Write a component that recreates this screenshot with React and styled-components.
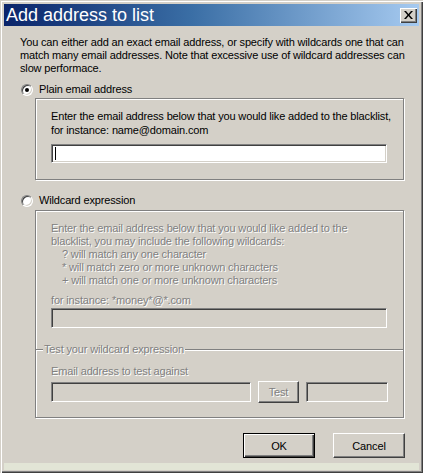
import React from 'react';
import styled, { createGlobalStyle, css } from 'styled-components';

const Global = createGlobalStyle`
  html,body{margin:0;padding:0;background:#d4d0c8;overflow:hidden;}
  *{box-sizing:border-box;}
`;

const face = '#d4d0c8';

const Window = styled.div`
  width:423px;height:473px;background:${face};
  padding:4px 4px 3px 4px;display:flex;flex-direction:column;
  font-family:"Liberation Sans",Arial,sans-serif;font-size:11px;color:#000;
  box-shadow:inset 1px 1px 0 ${face},inset 2px 2px 0 #fff,inset -1px -1px 0 #404040,inset -2px -2px 0 #808080;
`;

const TitleBar = styled.div`
  height:22px;display:flex;align-items:center;justify-content:space-between;
  padding:0 2px 0 2px;color:#fff;font-size:18px;line-height:22px;
  background:linear-gradient(90deg,#0a246a 0%,#3a6ea5 45%,#a6caf0 100%);
`;

const CloseBtn = styled.button`
  width:17px;height:15px;padding:0;margin:0;border:0;background:${face};
  display:flex;align-items:center;justify-content:center;
  box-shadow:inset 1px 1px 0 #fff,inset -1px -1px 0 #404040,inset -2px -2px 0 #808080;
`;

const Body = styled.div`
  flex:1;display:flex;flex-direction:column;padding:10px 14px 0 16px;
  letter-spacing:-0.15px;
`;

const Text = styled.div`
  line-height:${p => p.$lh || 13}px;white-space:nowrap;
  padding-left:${p => p.$indent || 0}px;
  margin-top:${p => p.$mt || 0}px;
  ${p => p.$disabled && css`color:#808080;text-shadow:1px 1px 0 #fff;`}
`;

const RadioRow = styled.label`
  display:flex;align-items:center;gap:6px;height:13px;line-height:13px;
  margin-top:${p => p.$mt}px;padding-left:1px;
`;

const RadioDot = styled.span`
  width:12px;height:12px;border-radius:50%;background:#fff;position:relative;flex:none;
  border:1px solid;border-color:#808080 #fff #fff #808080;
  box-shadow:inset 1px 1px 0 #404040,inset -1px -1px 0 ${face};
  ${p => p.$checked && css`
    &::after{content:'';position:absolute;left:3px;top:3px;width:4px;height:4px;border-radius:50%;background:#000;}
  `}
`;

const Group = styled.div`
  margin-left:15px;width:369px;display:flex;flex-direction:column;
  border:1px solid #808080;
  box-shadow:inset 1px 1px 0 #fff,1px 1px 0 #fff;
  margin-top:${p => p.$mt}px;
  padding:${p => p.$pad};
`;

const Inner = styled.div`
  display:flex;flex-direction:column;padding:${p => p.$pad};
`;

const TextBox = styled.div`
  height:${p => p.$h || 20}px;width:${p => p.$w}px;flex:none;
  margin-top:${p => p.$mt || 0}px;
  background:${p => (p.$disabled ? face : '#fff')};
  border:1px solid;border-color:#808080 #fff #fff #808080;
  box-shadow:inset 1px 1px 0 #404040,inset -1px -1px 0 ${face};
  display:flex;align-items:center;padding-left:3px;
`;

const Caret = styled.span`
  width:1px;height:13px;background:#000;
`;

const Separator = styled.div`
  display:flex;align-items:center;gap:1px;height:13px;margin-top:15px;
  color:#808080;text-shadow:1px 1px 0 #fff;line-height:13px;
`;

const Etch = styled.span`
  height:2px;border-top:1px solid #808080;border-bottom:1px solid #fff;
  flex:${p => (p.$grow ? 1 : 'none')};width:${p => (p.$grow ? 'auto' : '7px')};
`;

const TestRow = styled.div`
  display:flex;align-items:center;gap:7px;margin-top:3px;
`;

const Button = styled.button`
  font-family:inherit;font-size:11px;background:${face};padding:0;margin:0;
  width:${p => p.$w}px;height:${p => p.$h}px;color:#000;letter-spacing:-0.15px;
  border:1px solid;border-color:#fff #404040 #404040 #fff;
  box-shadow:inset -1px -1px 0 #808080,inset 1px 1px 0 ${face};
  ${p => p.$default && css`
    border:1px solid #000;
    box-shadow:inset 1px 1px 0 #fff,inset -1px -1px 0 #404040,inset -2px -2px 0 #808080;
  `}
  ${p => p.$disabled && css`color:#808080;text-shadow:1px 1px 0 #fff;`}
`;

const Actions = styled.div`
  display:flex;justify-content:flex-end;gap:18px;margin-top:15px;
`;

const Footer = styled.div`
  height:7px;background:#e2e5d6;margin:0 -14px 0 -16px;margin-top:auto;
`;

export default function App() {
  return (
    <>
      <Global />
      <Window>
        <TitleBar>
          <span>Add address to list</span>
          <CloseBtn aria-label="Close">
            <svg width="9" height="8" viewBox="0 0 9 8">
              <path d="M0 0h2l2.5 3 2.5-3h2L5.5 4 9 8H7L4.5 5 2 8H0l3.5-4z" fill="#000" />
            </svg>
          </CloseBtn>
        </TitleBar>
        <Body>
          <Text>You can either add an exact email address, or specify with wildcards one that can</Text>
          <Text>match many email addresses. Note that excessive use of wildcard addresses can</Text>
          <Text>slow performace.</Text>

          <RadioRow $mt={8}><RadioDot $checked />Plain email address</RadioRow>
          <Group $mt={2} $pad="10px 15px 16px 15px">
            <Text $lh={14}>Enter the email address below that you would like added to the blacklist,</Text>
            <Text $lh={14}>for instance: name@domain.com</Text>
            <TextBox $w={336} $mt={7} $h={19}><Caret /></TextBox>
          </Group>

          <RadioRow $mt={14}><RadioDot />Wildcard expression</RadioRow>
          <Group $mt={3} $pad="0 0 14px 0">
            <Inner $pad="11px 15px 0 15px">
              <Text $disabled>Enter the email address below that you would like added to the</Text>
              <Text $disabled>blacklist, you may include the following wildcards:</Text>
              <Text $disabled $indent={11}>? will match any one character</Text>
              <Text $disabled $indent={11}>* will match zero or more unknown characters</Text>
              <Text $disabled $indent={11}>+ will match one or more unknown characters</Text>
              <Text $disabled $mt={7}>for instance: *money*@*.com</Text>
              <TextBox $w={336} $mt={1} $disabled />
            </Inner>
            <Separator>
              <Etch />Test your wildcard expression<Etch $grow />
            </Separator>
            <Inner $pad="9px 15px 0 15px">
              <Text $disabled>Email address to test against</Text>
              <TestRow>
                <TextBox $w={200} $disabled />
                <Button $w={41} $h={22} $disabled>Test</Button>
                <TextBox $w={82} $disabled />
              </TestRow>
            </Inner>
          </Group>

          <Actions>
            <Button $w={72} $h={25} $default>OK</Button>
            <Button $w={72} $h={25}>Cancel</Button>
          </Actions>
          <Footer />
        </Body>
      </Window>
    </>
  );
}
